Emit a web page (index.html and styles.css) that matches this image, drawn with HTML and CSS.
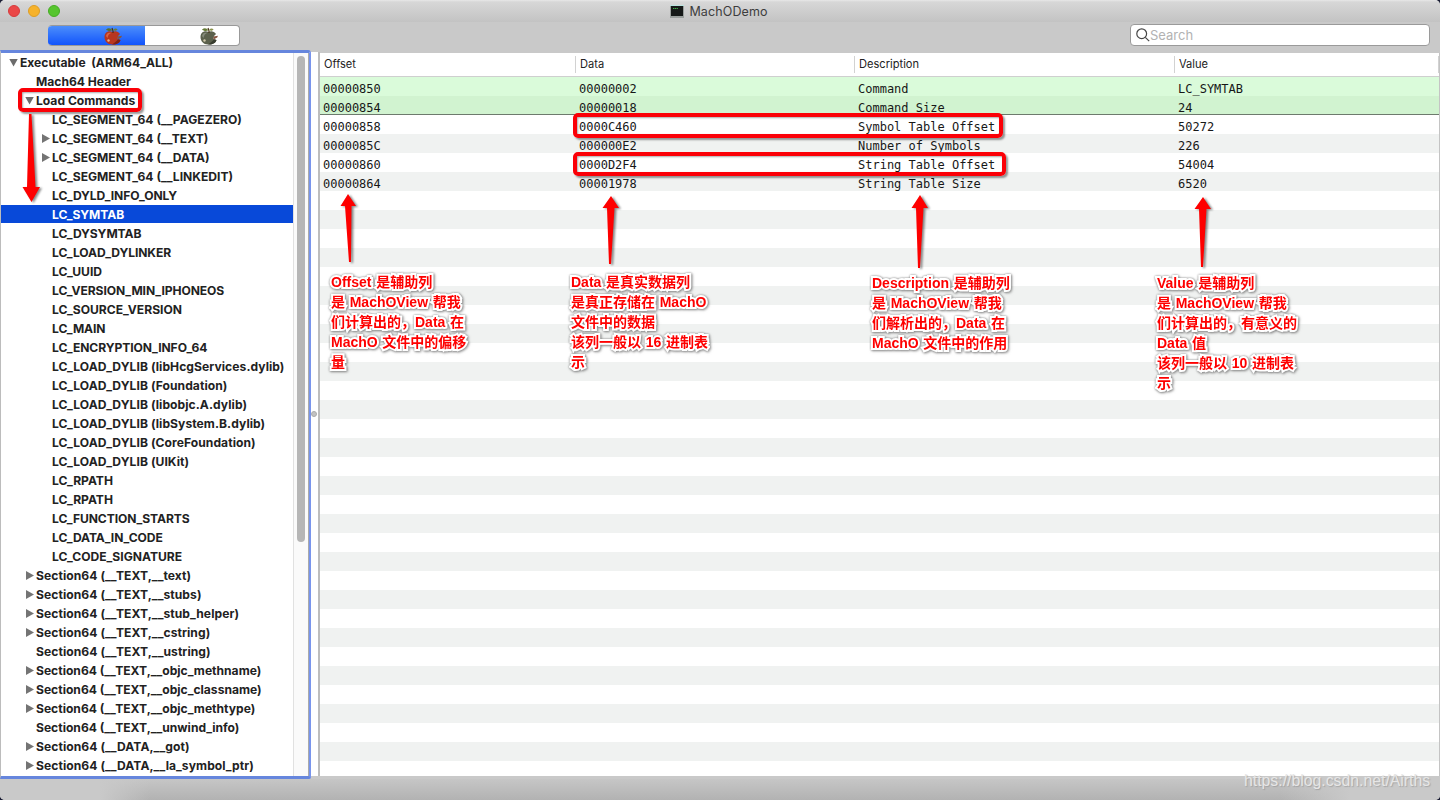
FILE: index.html
```
<!DOCTYPE html>
<html lang="zh">
<head>
<meta charset="utf-8">
<title>MachODemo</title>
<link rel="stylesheet" href="styles.css">
</head>
<body>
<div class="window">
  <header class="titlebar">
    <div class="lights"><i class="light red"></i><i class="light amber"></i><i class="light green"></i></div>
    <div class="title">
      <svg width="14" height="13" viewBox="0 0 14 13"><path d="M0 0h14v13H0z" fill="#9a9f9d"/><path d="M0 0h14v1H0z" fill="#b9e4df"/><path d="M1 1h12v10H1z" fill="#161918"/><path d="M3 3.5h5" stroke="#3fae4a" stroke-dasharray="1.3 .5"/></svg>
      <span>MachODemo</span>
    </div>
  </header>
  <div class="toolbar">
    <div class="segments">
      <div class="segment on">
        <svg class="apple" width="20" height="18" viewBox="0 0 20 18"><path d="M9.500 5C6 3 1.500 5 1.500 10c0 4 3 7.500 7.500 7.500 5 .3 7.500-1.500 8.500-4.500l-3-1 .5-3 2-2c-2-2.800-5-3.200-7.500-2z" fill="#b8351f"/><path d="M3 9c.5-3 3-4 5.500-3-2 .5-3.500 2-4 5z" fill="#db6444"/><path d="M9 17.500c5 .3 7.500-1.500 8.500-4.500l-2.500-.8c-1.500 2.300-3.500 3.300-6 5.300z" fill="#7c1f14"/><path d="M10 6c.3-2-.3-3.500-1-5" stroke="#4a2c12" stroke-width="1.200" fill="none"/><path d="M3 2.500c2.500-2 4.500-1.500 6.500.8-2.500 1-4.500 1-6.500-.8z" fill="#58702e"/><path d="M10 3c1.500-1.600 3-1.800 4.500-.8C13.500 4 12 4 10 3z" fill="#6c7c38"/><path d="M14.500 9.500l4.500-.8-.8 1.800-3.700 2z" fill="#8a5636"/><circle cx="5.500" cy="13.500" r="1.200" fill="#f0b386"/></svg>
      </div>
      <div class="segment">
        <svg class="apple" width="20" height="18" viewBox="0 0 20 18"><path d="M9.500 5C6 3 1.500 5 1.500 10c0 4 3 7.500 7.500 7.500 5 .3 7.500-1.500 8.500-4.500l-3-1 .5-3 2-2c-2-2.800-5-3.200-7.500-2z" fill="#5b604c"/><path d="M3 9c.5-3 3-4 5.500-3-2 .5-3.500 2-4 5z" fill="#84897a"/><path d="M9 17.500c5 .3 7.500-1.500 8.500-4.500l-2.500-.8c-1.500 2.300-3.500 3.300-6 5.300z" fill="#383c2f"/><path d="M10 6c.3-2-.3-3.500-1-5" stroke="#4a3218" stroke-width="1.200" fill="none"/><path d="M3 2.500c2.500-2 4.500-1.500 6.500.8-2.500 1-4.500 1-6.500-.8z" fill="#667a36"/><path d="M10 3c1.500-1.600 3-1.800 4.500-.8C13.500 4 12 4 10 3z" fill="#88904a"/><path d="M14.500 9.500l4.500-.8-.8 1.800-3.700 2z" fill="#875440"/><circle cx="5.500" cy="13.500" r="1.200" fill="#cfc7aa"/></svg>
      </div>
    </div>
    <div class="search">
      <svg width="14" height="14" viewBox="0 0 14 14" fill="none" stroke="#464646" stroke-width="1.200"><circle cx="5.700" cy="5.700" r="4.900"/><path d="M9.300 9.300l3.900 3.900"/></svg>
      <span>Search</span>
    </div>
  </div>
  <main class="content">
    <aside class="sidebar">
      <ul class="tree">
        <li class="l0 open"><span>Executable&nbsp; (ARM64_ALL)</span></li>
        <li class="l1"><span>Mach64 Header</span></li>
        <li class="l1 open"><span>Load Commands</span></li>
        <li class="l2"><span>LC_SEGMENT_64 (__PAGEZERO)</span></li>
        <li class="l2 closed"><span>LC_SEGMENT_64 (__TEXT)</span></li>
        <li class="l2 closed"><span>LC_SEGMENT_64 (__DATA)</span></li>
        <li class="l2"><span>LC_SEGMENT_64 (__LINKEDIT)</span></li>
        <li class="l2 caps"><span>LC_DYLD_INFO_ONLY</span></li>
        <li class="l2 caps selected"><span>LC_SYMTAB</span></li>
        <li class="l2 caps"><span>LC_DYSYMTAB</span></li>
        <li class="l2 caps"><span>LC_LOAD_DYLINKER</span></li>
        <li class="l2"><span>LC_UUID</span></li>
        <li class="l2 caps"><span>LC_VERSION_MIN_IPHONEOS</span></li>
        <li class="l2"><span>LC_SOURCE_VERSION</span></li>
        <li class="l2 caps"><span>LC_MAIN</span></li>
        <li class="l2 caps"><span>LC_ENCRYPTION_INFO_64</span></li>
        <li class="l2 mixed"><span>LC_LOAD_DYLIB (libHcgServices.dylib)</span></li>
        <li class="l2 mixed"><span>LC_LOAD_DYLIB (Foundation)</span></li>
        <li class="l2 mixed"><span>LC_LOAD_DYLIB (libobjc.A.dylib)</span></li>
        <li class="l2 mixed"><span>LC_LOAD_DYLIB (libSystem.B.dylib)</span></li>
        <li class="l2 mixed"><span>LC_LOAD_DYLIB (CoreFoundation)</span></li>
        <li class="l2 mixed"><span>LC_LOAD_DYLIB (UIKit)</span></li>
        <li class="l2"><span>LC_RPATH</span></li>
        <li class="l2"><span>LC_RPATH</span></li>
        <li class="l2 caps"><span>LC_FUNCTION_STARTS</span></li>
        <li class="l2 caps"><span>LC_DATA_IN_CODE</span></li>
        <li class="l2"><span>LC_CODE_SIGNATURE</span></li>
        <li class="l1 closed mixed"><span>Section64 (__TEXT,__text)</span></li>
        <li class="l1 closed mixed"><span>Section64 (__TEXT,__stubs)</span></li>
        <li class="l1 closed mixed"><span>Section64 (__TEXT,__stub_helper)</span></li>
        <li class="l1 closed mixed"><span>Section64 (__TEXT,__cstring)</span></li>
        <li class="l1 mixed"><span>Section64 (__TEXT,__ustring)</span></li>
        <li class="l1 closed"><span>Section64 (__TEXT,__objc_methname)</span></li>
        <li class="l1 closed"><span>Section64 (__TEXT,__objc_classname)</span></li>
        <li class="l1 closed"><span>Section64 (__TEXT,__objc_methtype)</span></li>
        <li class="l1"><span>Section64 (__TEXT,__unwind_info)</span></li>
        <li class="l1 closed mixed"><span>Section64 (__DATA,__got)</span></li>
        <li class="l1 closed mixed"><span>Section64 (__DATA,__la_symbol_ptr)</span></li>
      </ul>
      <div class="scrollbar"><div class="thumb"></div></div>
    </aside>
    <div class="splitter"><i class="knob"></i></div>
    <section class="table">
      <div class="row head"><span>Offset</span><span>Data</span><span>Description</span><span>Value</span></div>
      <div class="rows">
        <div class="row lime"><span>00000850</span><span>00000002</span><span>Command</span><span>LC_SYMTAB</span></div>
        <div class="row lime-dark"><span>00000854</span><span>00000018</span><span>Command Size</span><span>24</span></div>
        <div class="row"><span>00000858</span><span>0000C460</span><span>Symbol Table Offset</span><span>50272</span></div>
        <div class="row"><span>0000085C</span><span>000000E2</span><span>Number of Symbols</span><span>226</span></div>
        <div class="row"><span>00000860</span><span>0000D2F4</span><span>String Table Offset</span><span>54004</span></div>
        <div class="row"><span>00000864</span><span>00001978</span><span>String Table Size</span><span>6520</span></div>
      </div>
    </section>
  </main>
  <footer class="statusbar"></footer>

  <div class="box box-load"></div>
  <div class="box box-symbol"></div>
  <div class="box box-string"></div>
  <svg class="arrows" width="1440" height="800" viewBox="0 0 1440 800" fill="#fe0000">
    <path d="M29 114h2.500l4 73h4.500l-8.500 15-9-15h4.500z"/>
    <path d="M348 194l8 12h-4.500L351 262h-2l-4-56h-4.500z"/>
    <path d="M611 196l8 12h-4.500L611 264h-2l-2-56h-4.500z"/>
    <path d="M920 195l8 13h-4.500L920 268h-2l-2-60h-4.500z"/>
    <path d="M1203 197l8 12h-4.500L1203 267h-2l-2-58h-4.500z"/>
  </svg>
  <p class="note note-offset">Offset 是辅助列<br>是 MachOView 帮我<br>们计算出的，Data 在<br>MachO 文件中的偏移<br>量</p>
  <p class="note note-data">Data 是真实数据列<br>是真正存储在 MachO<br>文件中的数据<br>该列一般以 16 进制表<br>示</p>
  <p class="note note-desc">Description 是辅助列<br>是 MachOView 帮我<br>们解析出的，Data 在<br>MachO 文件中的作用</p>
  <p class="note note-value">Value 是辅助列<br>是 MachOView 帮我<br>们计算出的，有意义的<br>Data 值<br>该列一般以 10 进制表<br>示</p>
  <div class="watermark">https://blog.csdn.net/Airths</div>
</div>
</body>
</html>
```
FILE: styles.css
```
* { box-sizing: border-box; }
body { margin: 0; background: #1b1e35; font-family: Inter, "Noto Sans CJK SC", sans-serif; }
.window { position: relative; width: 1440px; height: 800px; overflow: hidden; display: flex; flex-direction: column; background: #c9c9c9; border-radius: 5px; }

.titlebar { height: 22px; flex: none; display: grid; grid-template-columns: 1fr auto 1fr; align-items: center; background: linear-gradient(#e8e8e8 0, #d7d7d7 2px, #c3c3c3); }
.lights { display: flex; gap: 8px; padding-left: 8px; }
.light { width: 12px; height: 12px; border-radius: 50%; }
.red { background: #ea4848; border: 1px solid #d63b3c; }
.amber { background: #f6b22b; border: 1px solid #dd9d25; }
.green { background: #56c52e; border: 1px solid #45ac24; }
.title { display: flex; align-items: center; gap: 5px; font-size: 12.5px; line-height: 20px; color: #3d3d3d; letter-spacing: .12px; padding: 1px 2px 0 0; }

.toolbar { height: 28px; flex: none; display: flex; justify-content: space-between; align-items: flex-start; padding: 2px 10px 0 48px; }
.segments { display: flex; width: 192px; height: 21px; margin-top: 1px; border: 1px solid #999; border-radius: 4px; background: #fff; overflow: hidden; border-left: 0; }
.segment { width: 97px; display: flex; align-items: center; padding-left: 55px; }
.segment.on { background: linear-gradient(#4f91fb, #0f51fb); margin: -1px 0; }
.segment:not(.on) { padding-left: 54px; width: 94px; }
.apple { flex: none; }
.search { display: flex; align-items: center; gap: 0; width: 300px; height: 22px; padding-left: 5px; background: #fff; border: 1px solid #9a9a9a; border-radius: 4px; font-size: 13px; color: #b2b2b2; }

.content { height: 729px; flex: none; display: flex; align-items: flex-start; }
.sidebar { width: 311px; height: 729px; display: flex; border: 3px solid #6686dd; border-left: 1px solid #bcbcbc; border-right-color: #7894ec; border-right-width: 2px; border-radius: 0 3px 2px 0; background: #fff; overflow: hidden; }
.tree { flex: 1; margin: 0; padding: 0; list-style: none; font-size: 12.1px; font-weight: 700; color: #222; overflow: hidden; }
.tree li { height: 19px; line-height: 19px; display: flex; align-items: center; white-space: nowrap; }
.tree li::before { content: ""; width: 11px; flex: none; }
.tree .open::before { height: 8px; background: #6c6c6c; clip-path: polygon(0 0, 9px 0, 4.5px 8px); }
.tree .closed::before { height: 9px; background: #747474; clip-path: polygon(1px 0, 9px 4.500px, 1px 9px); }
.l0 { padding-left: 8px; }
.l1 { padding-left: 24px; }
.l2 { padding-left: 40px; }
.caps { letter-spacing: -.08px; }
.mixed { letter-spacing: .06px; }
.tree .selected { color: #fff; background: #0849d9; height: 18px; margin-bottom: 1px; }
.scrollbar { width: 16px; flex: none; border-left: 1px solid #e1e1e1; border-right: 1px solid #aaa; background: #fafafa; padding: 3px 0 0 3px; }
.thumb { width: 8px; height: 486px; border-radius: 4px; background: #b6b6b6; }
.splitter { width: 9px; height: 724px; flex: none; background: #fff; border-right: 2px solid #bdbdbd; margin: 2px 0 0; display: flex; align-items: center; }
.knob { width: 6px; height: 6px; border-radius: 50%; background: #c2c2c2; border: 1px solid #ababab; }
.table { flex: 1; height: 723px; margin-top: 3px; border-right: 1px solid #c4c4c4; display: flex; flex-direction: column; background: #fff; }
.row { display: grid; grid-template-columns: 256px 279px 320px 1fr; height: 19px; flex: none; }
.head { height: 24px; align-items: center; border-bottom: 1px solid #cfcfcf; font-size: 11.1px; color: #222; }
.head span { height: 17px; line-height: 17px; padding-left: 4px; border-right: 1px solid #d2d2d2; }
.rows { flex: 1; background: repeating-linear-gradient(#fff 0 19px, #f0f2f1 19px 38px); font-family: "DejaVu Sans Mono", monospace; font-size: 12px; color: #171717; }
.rows .row { line-height: 25px; }
.rows .row span { padding-left: 3px; white-space: pre; }
.lime { background: #dafbda; }
.lime-dark { background: #d1f3d0; border-bottom: 1px solid #6d7a6d; }
.statusbar { height: 21px; flex: none; background: linear-gradient(90deg, #c9c9c9 100px, transparent 150px, transparent 1280px, #c9c9c9 1350px), linear-gradient(#c6c6c6, #b2b2b2); }

.box { position: absolute; border: 4px solid #fb0007; border-radius: 5px; box-shadow: 2px 2px 2px #0006, inset 1px 1px 2px #0005; }
.box-load { left: 18px; top: 88px; width: 124px; height: 24px; }
.box-symbol { left: 573px; top: 113px; width: 430px; height: 25px; }
.box-string { left: 573px; top: 152px; width: 433px; height: 24px; }
.arrows { position: absolute; left: 0; top: 0; filter: drop-shadow(2px 1px 1px #0007); pointer-events: none; }
.note { position: absolute; margin: 0; font: bold 14px/20px "Liberation Sans", "Noto Sans CJK SC", sans-serif; word-spacing: .8px; color: #fe0000; white-space: nowrap; -webkit-text-stroke: 4px #fff; paint-order: stroke fill; filter: drop-shadow(0 0 1px #666a) drop-shadow(1px 1px 1px #5558); }
.note-offset { left: 331px; top: 272px; }
.note-data { left: 571px; top: 272px; }
.note-desc { left: 872px; top: 273px; }
.note-value { left: 1157px; top: 273px; }
.watermark { position: absolute; left: 1244px; top: 772px; font: 15.8px/18px "Liberation Sans", sans-serif; color: #e6e6e6; text-shadow: 1px 1px 1px #8888; }
```
